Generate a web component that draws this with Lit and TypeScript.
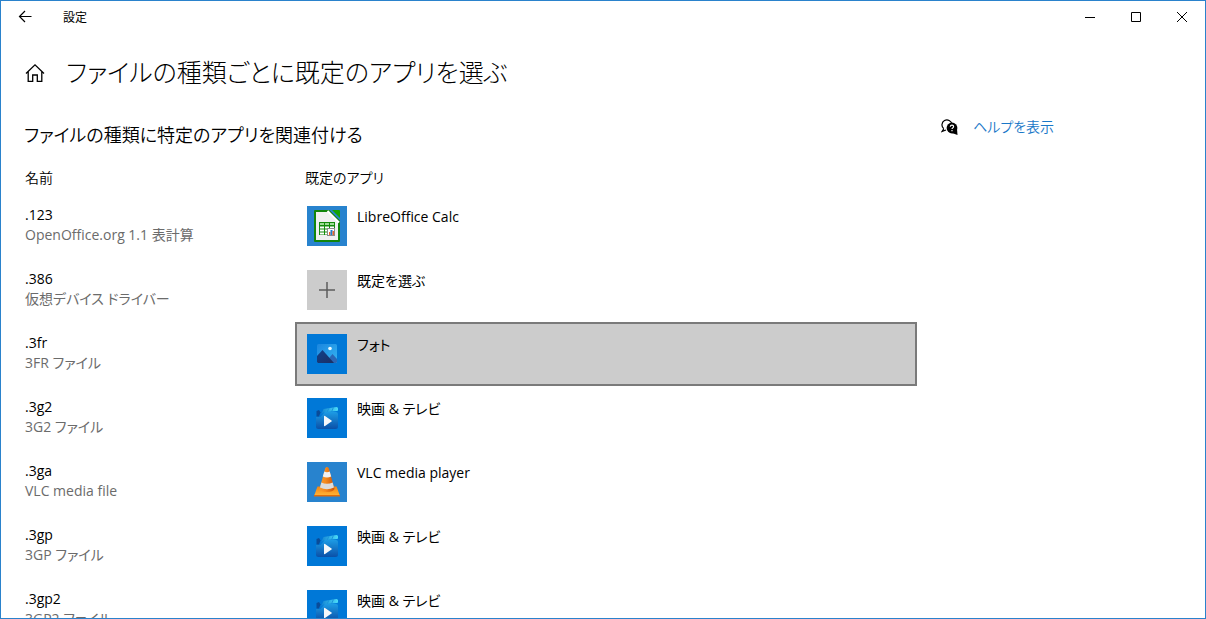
import { LitElement, html, css, svg } from "lit";
import { customElement, property, state } from "lit/decorators.js";
import { classMap } from "lit/directives/class-map.js";

type AppIcon = "calc" | "none" | "photos" | "movies" | "vlc";

interface Association {
  ext: string;
  description: string;
  app: string;
  icon: AppIcon;
}

const associations: Association[] = [
  { ext: ".123", description: "OpenOffice.org 1.1 表計算", app: "LibreOffice Calc", icon: "calc" },
  { ext: ".386", description: "仮想デバイス ドライバー", app: "既定を選ぶ", icon: "none" },
  { ext: ".3fr", description: "3FR ファイル", app: "フォト", icon: "photos" },
  { ext: ".3g2", description: "3G2 ファイル", app: "映画 & テレビ", icon: "movies" },
  { ext: ".3ga", description: "VLC media file", app: "VLC media player", icon: "vlc" },
  { ext: ".3gp", description: "3GP ファイル", app: "映画 & テレビ", icon: "movies" },
  { ext: ".3gp2", description: "3GP2 ファイル", app: "映画 & テレビ", icon: "movies" },
];

const drawings = {
  calc: svg`
    <path d="M8 5H22L32 15V35H8Z" fill="#f0f0f0" stroke="#12850b" stroke-width="2" stroke-linejoin="round"/>
    <path d="M20.500 5L32 16.500" stroke="#fff" stroke-width="2"/>
    <path d="M25 4H32Q33 4 33 5V12Z" fill="#18a303"/>
    <rect x="12" y="16" width="16" height="13" fill="#148a0b"/>
    <path d="M13 18h4M18 18h4M23 18h4" stroke="#9fdc98" stroke-width="2"/>
    <path d="M13 21.500h4M18 21.500h4M23 21.500h4M13 24.500h4M18 24.500h4M13 27.500h4M18 27.500h2" stroke="#fff" stroke-width="2"/>
    <rect x="20.500" y="22.500" width="7" height="7" fill="#fff" stroke="#8a8a8a"/>
    <rect x="22" y="26" width="1.500" height="3" fill="#e8642c"/>
    <rect x="23.500" y="24" width="2" height="5" fill="#1d7fd0"/>
    <rect x="25.500" y="25" width="1.500" height="4" fill="#e8642c"/>`,
  none: svg`<path d="M12 20H28M20 12V28" stroke="#5c5c5c" stroke-width="1.500" fill="none"/>`,
  photos: svg`
    <defs>
      <linearGradient id="sky" x1="0" y1="0" x2="1" y2="1"><stop offset="0" stop-color="#1b86df"/><stop offset="1" stop-color="#35b5f2"/></linearGradient>
      <linearGradient id="hill" x1="0" y1="0" x2="1" y2="1"><stop offset="0" stop-color="#10418c"/><stop offset="1" stop-color="#1c2f63"/></linearGradient>
      <clipPath id="frame"><rect x="10" y="10" width="20" height="19" rx="1.500"/></clipPath>
    </defs>
    <g clip-path="url(#frame)">
      <rect x="10" y="10" width="20" height="19" fill="url(#sky)"/>
      <path d="M18 29L25.500 20L31 26V30Z" fill="#2a66b5"/>
      <path d="M9 23L15.500 16L27 29H9Z" fill="url(#hill)"/>
    </g>
    <circle cx="23" cy="14.500" r="1.800" fill="#e9f9ff"/>`,
  movies: svg`
    <defs>
      <linearGradient id="clap" x1="0" y1="0" x2="1" y2="0"><stop offset="0" stop-color="#1282d2"/><stop offset="1" stop-color="#4cdcf8"/></linearGradient>
      <linearGradient id="board" x1="0" y1="0" x2="0" y2="1"><stop offset="0" stop-color="#1d9be4"/><stop offset="1" stop-color="#0b50a8"/></linearGradient>
    </defs>
    <path d="M9.500 13L12 12L13.500 14.500L12 18.500H9.500Z" fill="#0a4b98"/>
    <path d="M16.500 11L29.500 9Q31 9 31 10.500V12Q31 13 30 13L17 14.200L14 16.500Z" fill="url(#clap)"/>
    <path d="M20 14.200L22 10M24.500 13.800L26.500 9.300" stroke="#1a92dc" stroke-width="1"/>
    <path d="M9 19H13.500L16.500 15.500Q17 14 18 14H29Q31 14 31 16V28.500Q31 31 28.500 31H11.500Q9 31 9 28.500Z" fill="url(#board)"/>
    <path d="M17 18.500Q17 17.500 18 18L24.500 22.500Q25.300 23 24.500 23.600L18 28Q17 28.500 17 27.500Z" fill="#f5f7fa"/>`,
  vlc: svg`
    <defs>
      <linearGradient id="cone" x1="0" y1="0" x2="1" y2="0"><stop offset="0" stop-color="#f79a2c"/><stop offset=".4" stop-color="#f58a1c"/><stop offset="1" stop-color="#c9520a"/></linearGradient>
      <linearGradient id="foot" x1="0" y1="0" x2="0" y2="1"><stop offset="0" stop-color="#f58410"/><stop offset="1" stop-color="#ffb73a"/></linearGradient>
    </defs>
    <path d="M10.500 24.500H29.500L33 34H7Z" fill="url(#foot)"/>
    <path d="M7 33H33V34.500H7Z" fill="#e06c08"/>
    <path d="M18.300 6Q20 4 21.700 6L27.500 27Q26 30 20 30Q14 30 12.500 27Z" fill="url(#cone)"/>
    <path d="M17.300 9.500Q20 10.800 22.700 9.500L24.200 14.500Q20 16.500 15.800 14.500Z" fill="#f1f1f1"/>
    <path d="M14.300 20.500Q20 23 25.700 20.500L27 25.500Q20 29 13 25.500Z" fill="#dcdcdc"/>`,
};

const shared = css`
  :host {
    box-sizing: border-box;
    font-family: "Open Sans", "Noto Sans CJK JP", sans-serif;
    font-feature-settings: "palt";
  }
  *, *::before, *::after { box-sizing: border-box; }
  button { font: inherit; font-feature-settings: inherit; color: inherit; border: 0; margin: 0; padding: 0; background: none; }
  svg { display: block; fill: none; }
`;

@customElement("app-choice")
class AppChoice extends LitElement {
  @property() name = "";
  @property() icon: AppIcon = "none";
  @property({ type: Boolean }) selected = false;

  static styles = [shared, css`
    :host { display: block; }
    .choice {
      display: flex;
      align-items: flex-start;
      gap: 10px;
      width: 100%;
      height: 64px;
      padding: 10px;
      border: 2px solid transparent;
      text-align: left;
      font-size: 14px;
      line-height: 22px;
    }
    .choice.selected { background: #ccc; border-color: #7a7a7a; }
    .tile { flex: none; width: 40px; height: 40px; background: #0078d7; }
    .tile.calc, .tile.vlc { background: #2883ce; }
    .tile.none { background: #ccc; }
  `];

  render() {
    return html`
      <button class=${classMap({ choice: true, selected: this.selected })}>
        <span class="tile ${this.icon}">
          <svg width="40" height="40" viewBox="0 0 40 40" aria-hidden="true">${drawings[this.icon]}</svg>
        </span>
        <span>${this.name}</span>
      </button>`;
  }
}

@customElement("title-bar")
class TitleBar extends LitElement {
  static styles = [shared, css`
    :host { display: flex; height: 32px; color: #000; }
    button { display: grid; place-items: center; width: 46px; height: 32px; }
    .back { width: 48px; }
    .caption { flex: 1; padding-left: 14px; font-size: 12px; line-height: 34px; }
    svg { stroke: currentColor; }
  `];

  render() {
    return html`
      <button class="back" aria-label="戻る">
        <svg width="14" height="14" viewBox="0 0 14 14" stroke-width="1.200"><path d="M1.500 6.500H13.500M7 1L1.500 6.500L7 12"/></svg>
      </button>
      <span class="caption">設定</span>
      <button aria-label="最小化"><svg width="10" height="10" viewBox="0 0 10 10"><path d="M0 5.500H10"/></svg></button>
      <button aria-label="最大化"><svg width="10" height="10" viewBox="0 0 10 10"><path d="M.5 .5H9.500V9.500H.5Z"/></svg></button>
      <button aria-label="閉じる"><svg width="10" height="10" viewBox="0 0 10 10"><path d="M0 0L10 10M10 0L0 10"/></svg></button>`;
  }
}

@customElement("app-root")
class AppRoot extends LitElement {
  @state() private selected = ".3fr";

  static styles = [shared, css`
    :host {
      display: flex;
      flex-direction: column;
      height: 100vh;
      overflow: hidden;
      border: 1px solid #2a82cc;
      background: #fff;
      color: #000;
      font-size: 14px;
      line-height: 20px;
    }
    header { display: flex; align-items: center; gap: 21px; padding: 21px 24px 0; }
    .home svg { stroke: #000; }
    h1 { margin: 0; font-size: 25px; line-height: 36px; font-weight: 300; }
    .body {
      flex: 1;
      min-height: 0;
      display: grid;
      grid-template-columns: minmax(0, 893px) minmax(0, 1fr);
      gap: 24px;
      padding: 28px 0 0 23px;
      overflow: hidden;
    }
    h2 { margin: 0; font-size: 18px; line-height: 34px; font-weight: 350; }
    table { width: 100%; table-layout: fixed; border-collapse: collapse; }
    th, td { padding: 0; text-align: left; vertical-align: top; font-weight: 400; }
    thead th { height: 42px; padding-top: 16px; font-weight: 350; }
    .type { width: 271px; }
    thead .app { padding-left: 10px; }
    thead th, tbody th { padding-left: 1px; }
    tbody th { padding-top: 11px; }
    .ext, .description { display: block; }
    .description { color: #6b6b6b; }
    .help { display: flex; align-items: center; gap: 15px; height: 20px; margin-top: -1px; }
    .help a { color: #1a78c8; font-weight: 350; text-decoration: none; }
  `];

  render() {
    return html`
      <title-bar></title-bar>
      <header>
        <button class="home" aria-label="ホーム">
          <svg width="20" height="20" viewBox="0 0 20 20" stroke-width="1.300"><path d="M1 11.500L10 2.800L19 11.500M3.200 9.800V19.300H7.700V13H12.300V19.300H16.800V9.800"/></svg>
        </button>
        <h1>ファイルの種類ごとに既定のアプリを選ぶ</h1>
      </header>
      <div class="body">
        <main>
          <h2>ファイルの種類に特定のアプリを関連付ける</h2>
          <table>
            <thead>
              <tr><th class="type" scope="col">名前</th><th class="app" scope="col">既定のアプリ</th></tr>
            </thead>
            <tbody>
              ${associations.map((a) => html`
                <tr>
                  <th scope="row">
                    <span class="ext">${a.ext}</span>
                    <span class="description">${a.description}</span>
                  </th>
                  <td>
                    <app-choice .name=${a.app} .icon=${a.icon} .selected=${a.ext === this.selected}
                      @click=${() => { this.selected = a.ext; }}></app-choice>
                  </td>
                </tr>`)}
            </tbody>
          </table>
        </main>
        <aside>
          <div class="help">
            <svg width="17" height="17" viewBox="0 0 17 17" aria-hidden="true">
              <path d="M2.800 9.800A5 5 0 1 1 10.900 5.200M2.800 9.800L1 12.500L5 11" stroke="#000" stroke-width="1.200"/>
              <circle cx="11" cy="9" r="5.400" fill="#000"/>
              <path d="M16 10L16.500 16L11 14Z" fill="#000"/>
              <path d="M9.300 7.700Q9.400 6.200 11 6.200Q12.600 6.200 12.600 7.600Q12.600 8.400 11.700 8.900Q11 9.300 11 10M11 11V12.200" stroke="#fff" stroke-width="1.200"/>
            </svg>
            <a href="#help">ヘルプを表示</a>
          </div>
        </aside>
      </div>`;
  }
}
